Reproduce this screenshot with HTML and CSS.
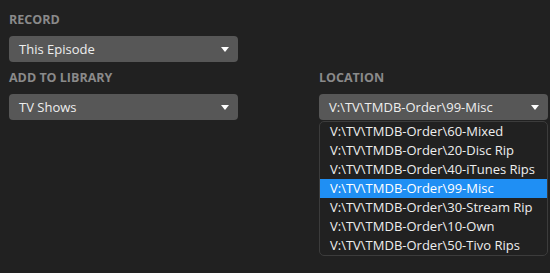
FILE: index.html
```html
<!DOCTYPE html>
<html>
<head>
<meta charset="utf-8">
<link rel="stylesheet" href="styles.css">
</head>
<body>
<div class="form">
  <div class="field">
    <div class="label">Record</div>
    <div class="select"><span>This Episode</span><span class="caret"></span></div>
  </div>
  <div class="field empty"></div>
  <div class="field">
    <div class="label">Add to Library</div>
    <div class="select"><span>TV Shows</span><span class="caret"></span></div>
  </div>
  <div class="field">
    <div class="label">Location</div>
    <div class="select-wrap">
      <div class="select"><span>V:\TV\TMDB-Order\99-Misc</span><span class="caret"></span></div>
      <ul class="menu">
        <li>V:\TV\TMDB-Order\60-Mixed</li>
        <li>V:\TV\TMDB-Order\20-Disc Rip</li>
        <li>V:\TV\TMDB-Order\40-iTunes Rips</li>
        <li class="active">V:\TV\TMDB-Order\99-Misc</li>
        <li>V:\TV\TMDB-Order\30-Stream Rip</li>
        <li>V:\TV\TMDB-Order\10-Own</li>
        <li>V:\TV\TMDB-Order\50-Tivo Rips</li>
      </ul>
    </div>
  </div>
</div>
</body>
</html>
```
FILE: styles.css
```css
html, body {
  margin: 0;
  padding: 0;
  background: #212121;
  height: 100%;
}
body {
  font-family: "Open Sans", "Noto Sans", sans-serif;
  color: #eeeeee;
}
.form {
  display: grid;
  grid-template-columns: 229px 229px;
  column-gap: 81px;
  row-gap: 7px;
  padding: 11px 0 0 9px;
}
.field {
  display: flex;
  flex-direction: column;
  gap: 7px;
}
.label {
  font-size: 12.5px;
  line-height: 18px;
  font-weight: 700;
  text-transform: uppercase;
  color: #8a8a8a;
}
.select-wrap {
  position: relative;
}
.select {
  height: 26px;
  box-sizing: border-box;
  background: #575757;
  border-radius: 4px;
  display: flex;
  align-items: center;
  justify-content: space-between;
  padding: 0 9px 0 10px;
  font-size: 13px;
  color: #eeeeee;
}
.caret {
  width: 0;
  height: 0;
  border-left: 4px solid transparent;
  border-right: 4px solid transparent;
  border-top: 5px solid #ffffff;
}
.menu {
  position: absolute;
  top: 27px;
  left: 0;
  right: 0;
  margin: 0;
  padding: 0;
  list-style: none;
  background: #212121;
  border: 1px solid #3c3c3c;
  border-radius: 5px;
  overflow: hidden;
}
.menu li {
  height: 19px;
  line-height: 19px;
  padding-left: 10px;
  font-size: 13px;
  color: #eeeeee;
  white-space: nowrap;
}
.menu li.active {
  background: #1f8ff4;
  color: #ffffff;
}
```
